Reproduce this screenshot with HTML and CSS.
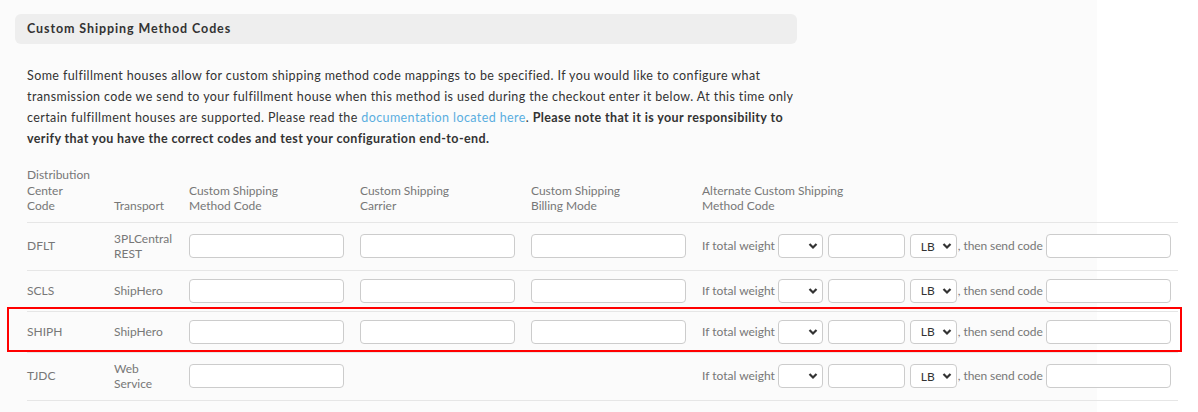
FILE: index.html
```html
<!DOCTYPE html>
<html>
<head>
<meta charset="UTF-8">
<title>Custom Shipping Method Codes</title>
<link rel="stylesheet" href="styles.css">
</head>
<body>
<div class="panel">
    <div class="section-title">Custom Shipping Method Codes</div>
    <p class="intro">Some fulfillment houses allow for custom shipping method code mappings to be specified. If you would like to configure what transmission code we send to your fulfillment house when this method is used during the checkout enter it below. At this time only certain fulfillment houses are supported. Please read the <a href="#">documentation located here</a>. <b>Please note that it is your responsibility to verify that you have the correct codes and test your configuration end-to-end.</b></p>

    <div class="codes">
        <table>
            <thead>
                <tr>
                    <th class="c-code">Distribution<br>Center<br>Code</th>
                    <th class="c-transport">Transport</th>
                    <th class="c-field">Custom Shipping<br>Method Code</th>
                    <th class="c-field">Custom Shipping<br>Carrier</th>
                    <th class="c-field">Custom Shipping<br>Billing Mode</th>
                    <th>Alternate Custom Shipping<br>Method Code</th>
                </tr>
            </thead>
            <tbody>
                <tr>
                    <td>DFLT</td>
                    <td>3PLCentral<br>REST</td>
                    <td><input type="text"></td>
                    <td><input type="text"></td>
                    <td><input type="text"></td>
                    <td><div class="alt"><span>If total weight</span><span class="sel op"><select><option></option></select><svg viewBox="0 0 10 8"><path d="M1.5 2 5 5.5 8.5 2"/></svg></span><input class="weight" type="text"><span class="sel unit"><select><option>LB</option></select><svg viewBox="0 0 10 8"><path d="M1.5 2 5 5.5 8.5 2"/></svg></span><span class="then">, then send code</span><input class="alt-code" type="text"></div></td>
                </tr>
                <tr>
                    <td>SCLS</td>
                    <td>ShipHero</td>
                    <td><input type="text"></td>
                    <td><input type="text"></td>
                    <td><input type="text"></td>
                    <td><div class="alt"><span>If total weight</span><span class="sel op"><select><option></option></select><svg viewBox="0 0 10 8"><path d="M1.5 2 5 5.5 8.5 2"/></svg></span><input class="weight" type="text"><span class="sel unit"><select><option>LB</option></select><svg viewBox="0 0 10 8"><path d="M1.5 2 5 5.5 8.5 2"/></svg></span><span class="then">, then send code</span><input class="alt-code" type="text"></div></td>
                </tr>
                <tr class="marked">
                    <td>SHIPH</td>
                    <td>ShipHero</td>
                    <td><input type="text"></td>
                    <td><input type="text"></td>
                    <td><input type="text"></td>
                    <td><div class="alt"><span>If total weight</span><span class="sel op"><select><option></option></select><svg viewBox="0 0 10 8"><path d="M1.5 2 5 5.5 8.5 2"/></svg></span><input class="weight" type="text"><span class="sel unit"><select><option>LB</option></select><svg viewBox="0 0 10 8"><path d="M1.5 2 5 5.5 8.5 2"/></svg></span><span class="then">, then send code</span><input class="alt-code" type="text"></div></td>
                </tr>
                <tr>
                    <td>TJDC</td>
                    <td>Web<br>Service</td>
                    <td><input type="text"></td>
                    <td></td>
                    <td></td>
                    <td><div class="alt"><span>If total weight</span><span class="sel op"><select><option></option></select><svg viewBox="0 0 10 8"><path d="M1.5 2 5 5.5 8.5 2"/></svg></span><input class="weight" type="text"><span class="sel unit"><select><option>LB</option></select><svg viewBox="0 0 10 8"><path d="M1.5 2 5 5.5 8.5 2"/></svg></span><span class="then">, then send code</span><input class="alt-code" type="text"></div></td>
                </tr>
            </tbody>
        </table>
        <div class="highlight"></div>
    </div>
</div>
</body>
</html>
```

FILE: styles.css
```css
body{
    margin: 0;
    background: #fff;
    font-family: Lato, "Open Sans", sans-serif;
    color: #333;
}
.panel{
    width: 1097px;
    min-height: 412px;
    background: #fbfbfb;
    padding: 14px 0 0 15px;
    box-sizing: border-box;
}
.section-title{
    width: 782px;
    height: 30px;
    box-sizing: border-box;
    padding: 0 12px;
    line-height: 30px;
    background: #eeeeee;
    border-radius: 6px;
    font-size: 12.5px;
    font-weight: bold;
    letter-spacing: 0.9px;
    color: #333;
}
.intro{
    width: 792px;
    margin: 21px 0 0 12px;
    font-size: 12.5px;
    line-height: 21px;
    letter-spacing: 0.4px;
    color: #333;
}
.intro a{
    color: #5aaee0;
    text-decoration: none;
}
.intro b{
    font-weight: bold;
}
.codes{
    position: relative;
    margin: 18px 0 0 12px;
    width: 1151px;
}
table{
    border-collapse: collapse;
    width: 1151px;
    font-size: 12px;
    color: #777;
}
th{
    font-weight: normal;
    text-align: left;
    vertical-align: bottom;
    line-height: 15.5px;
    padding: 0 0 8px;
}
td{
    line-height: 15.5px;
    padding: 8px 0;
    vertical-align: middle;
}
tr{
    border-bottom: 1px solid #e6e6e6;
}
.c-code{
    width: 87px;
}
.c-transport{
    width: 75px;
}
.c-field{
    width: 171px;
}
input, select{
    font-family: Lato, sans-serif;
    font-size: 12px;
    height: 24px;
    box-sizing: border-box;
    border: 1px solid #cccccc;
    border-radius: 4px;
    background: #fff;
    outline: none;
}
td > input{
    display: block;
    width: 155px;
}
.alt{
    display: flex;
    align-items: center;
    white-space: nowrap;
}
.sel{
    position: relative;
    display: block;
    margin-left: 3px;
}
.sel select{
    appearance: none;
    -webkit-appearance: none;
    padding: 0 0 0 10px;
    color: #333;
    display: block;
}
.sel svg{
    position: absolute;
    top: 8px;
    right: 5px;
    width: 10px;
    height: 8px;
    fill: none;
    stroke: #333;
    stroke-width: 2.2;
    pointer-events: none;
}
.op select{
    width: 45px;
}
.unit{
    margin-left: 5px;
}
.unit select{
    width: 47px;
}
.weight{
    width: 77px;
    margin-left: 5px;
}
.then{
    margin-left: 1px;
    letter-spacing: -0.1px;
}
.alt-code{
    width: 125px;
    margin-left: 3px;
}
.highlight{
    position: absolute;
    left: -20px;
    top: 140px;
    width: 1175px;
    height: 45px;
    box-sizing: border-box;
    border: 2.5px solid #f00;
    pointer-events: none;
}
```
